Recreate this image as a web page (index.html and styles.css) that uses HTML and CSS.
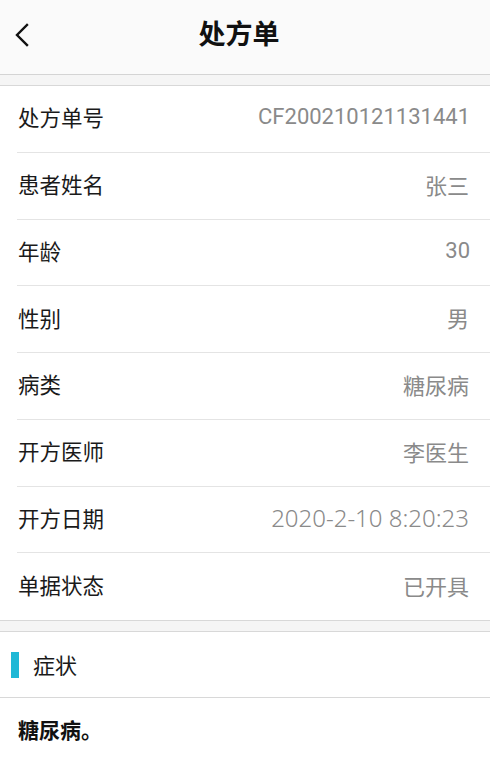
FILE: index.html
```html
<!DOCTYPE html>
<html lang="zh">
<head>
<meta charset="utf-8">
<title>处方单</title>
<link rel="stylesheet" href="styles.css">
</head>
<body>
<header class="topbar">
  <span class="back">
    <svg width="16" height="24" viewBox="0 0 16 24"><path d="M13 2 L3 12 L13 22" fill="none" stroke="#111" stroke-width="2.4" stroke-linecap="square"/></svg>
  </span>
  <h1 class="title">处方单</h1>
</header>
<div class="gap"></div>
<section class="card">
  <div class="row"><span class="label">处方单号</span><span class="value roboto">CF200210121131441</span></div>
  <div class="row"><span class="label">患者姓名</span><span class="value">张三</span></div>
  <div class="row"><span class="label">年龄</span><span class="value roboto">30</span></div>
  <div class="row"><span class="label">性别</span><span class="value">男</span></div>
  <div class="row"><span class="label">病类</span><span class="value">糖尿病</span></div>
  <div class="row"><span class="label">开方医师</span><span class="value">李医生</span></div>
  <div class="row"><span class="label">开方日期</span><span class="value noto">2020-2-10 8:20:23</span></div>
  <div class="row last"><span class="label">单据状态</span><span class="value">已开具</span></div>
</section>
<div class="gap"></div>
<section class="card">
  <div class="sec-title"><span class="bar"></span><span class="sec-text">症状</span></div>
  <div class="sec-body">糖尿病。</div>
</section>
</body>
</html>
```
FILE: styles.css
```css
* { box-sizing: border-box; }
html, body { margin: 0; padding: 0; }
body {
  width: 490px;
  height: 761px;
  overflow: hidden;
  background: #fff;
  font-family: "Noto Sans CJK SC", "Noto Sans", sans-serif;
  color: #1a1a1a;
}
.topbar {
  height: 75px;
  background: #fafafa;
  border-bottom: 1px solid #d4d4d4;
  display: flex;
  align-items: center;
  justify-content: center;
  position: relative;
}
.back {
  position: absolute;
  left: 14px;
  top: 23px;
  width: 16px;
  height: 24px;
  display: flex;
}
.title {
  margin: 0;
  font-size: 27px;
  font-weight: 700;
  color: #111;
  margin-left: -12px;
  margin-top: -10px;
}
.gap {
  height: 11px;
  background: #f5f5f5;
  border-bottom: 1px solid #d8d8d8;
}
.card {
  background: #fff;
  border-bottom: 1px solid #d8d8d8;
}
.row {
  height: 66.75px;
  margin-left: 17px;
  padding-right: 21px;
  padding-bottom: 4px;
  display: flex;
  align-items: center;
  justify-content: space-between;
  border-bottom: 1px solid #e4e4e4;
}
.row.last { border-bottom: none; }
.label {
  font-size: 21.5px;
  color: #1a1a1a;
  padding-left: 1px;
}
.value {
  font-size: 22px;
  color: #8a8a8a;
}
.roboto {
  font-family: Roboto, "Noto Sans CJK SC", sans-serif;
  font-size: 22px;
  margin-right: -1px;
}
.noto {
  font-family: "Noto Sans", "Noto Sans CJK SC", sans-serif;
  font-size: 24px;
  font-weight: 300;
}
.sec-title {
  height: 66px;
  display: flex;
  align-items: center;
  padding-bottom: 2px;
  border-bottom: 1px solid #d8d8d8;
}
.bar {
  width: 8px;
  height: 26px;
  background: #1fb8d6;
  margin-left: 11px;
  margin-right: 14px;
  margin-top: 2px;
}
.sec-text {
  font-size: 22px;
  color: #1a1a1a;
}
.sec-body {
  padding: 16px 18px 0;
  height: 63px;
  font-size: 21px;
  font-weight: 700;
  color: #111;
}
```
